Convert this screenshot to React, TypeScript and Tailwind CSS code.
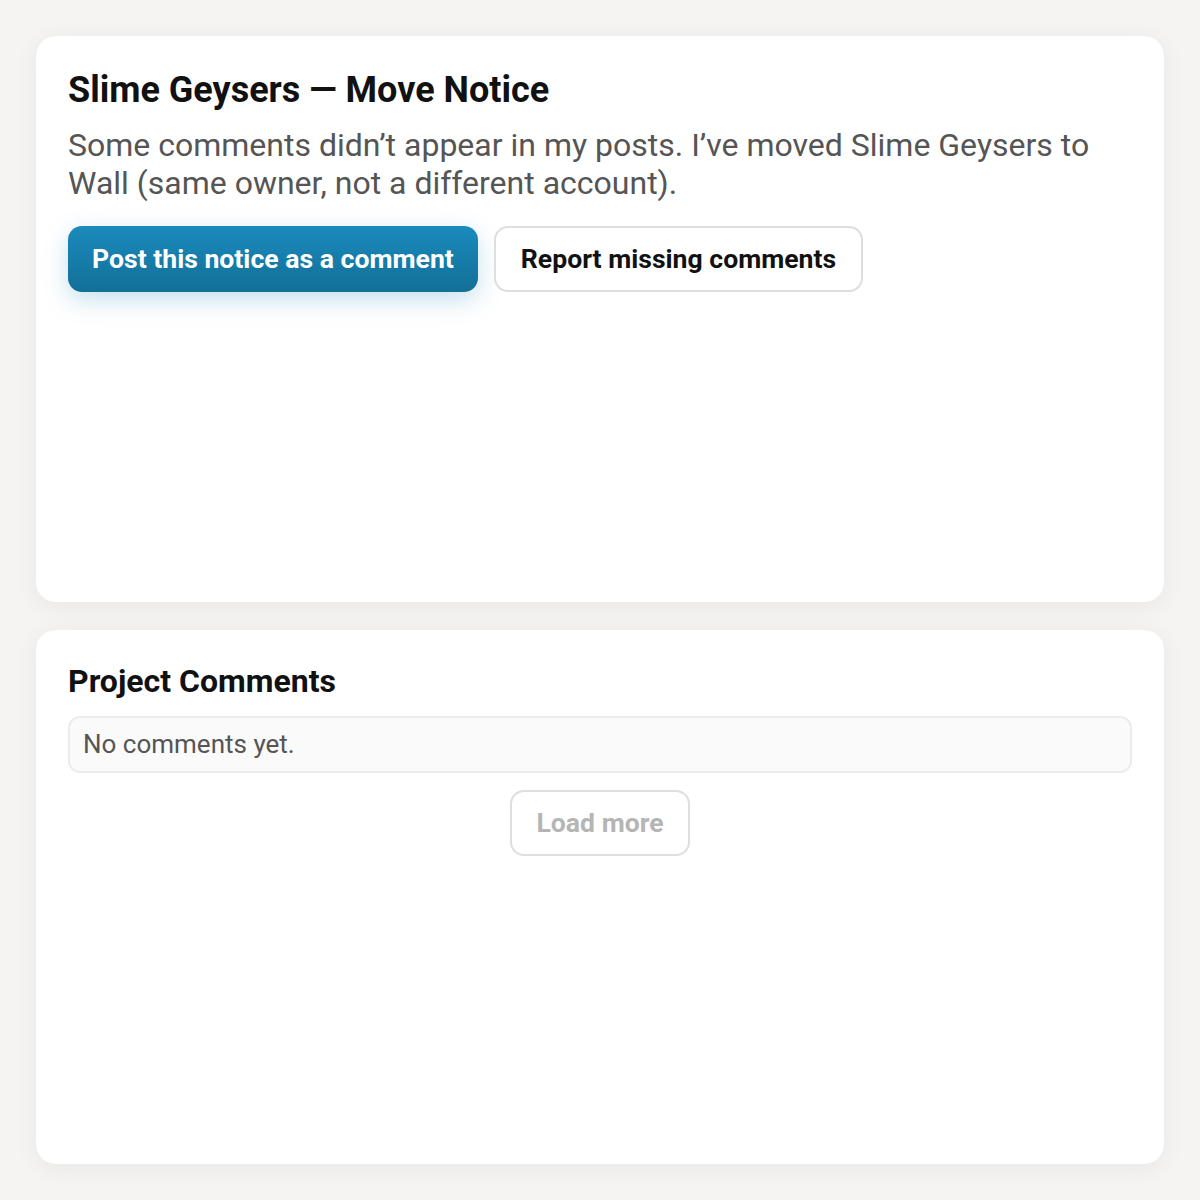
export default function App() {
  return (
    <div
      className="min-h-[1200px] bg-[#f5f4f2] p-[36px] flex flex-col gap-[28px]"
      style={{ fontFamily: "Roboto, 'Noto Sans', sans-serif" }}
    >
      <section className="h-[566px] rounded-[20px] bg-white px-[32px] pt-[32px] shadow-[0_4px_24px_rgba(0,0,0,0.06)]">
        <h1 className="text-[36px] leading-[44px] font-bold text-[#111]">Slime Geysers — Move Notice</h1>
        <p className="mt-[14px] text-[32px] leading-[38px] text-[#555]">
          Some comments didn’t appear in my posts. I’ve moved Slime Geysers to Wall (same owner, not a different account).
        </p>
        <div className="mt-[24px] flex gap-[16px]">
          <button className="h-[66px] px-[24px] rounded-[14px] bg-gradient-to-b from-[#1a8bbd] to-[#136f97] text-white text-[26.6px] font-bold shadow-[0_8px_24px_rgba(26,139,189,0.25)]">
            Post this notice as a comment
          </button>
          <button className="h-[66px] px-[25px] rounded-[14px] bg-white border-2 border-[#dedede] text-[#111] text-[26.6px] font-bold">
            Report missing comments
          </button>
        </div>
      </section>
      <section className="h-[534px] rounded-[20px] bg-white px-[32px] pt-[32px] shadow-[0_4px_24px_rgba(0,0,0,0.06)]">
        <h2 className="text-[32px] leading-[38px] font-bold text-[#111]">Project Comments</h2>
        <div className="mt-[16px] h-[57px] rounded-[12px] border-2 border-[#ececec] bg-[#fafafa] px-[13px] flex items-center text-[26px] text-[#555]">
          No comments yet.
        </div>
        <div className="mt-[17px] flex justify-center">
          <button className="h-[66px] w-[180px] rounded-[14px] bg-white border-2 border-[#dedede] text-[#b5b5b5] text-[26.6px] font-bold">
            Load more
          </button>
        </div>
      </section>
    </div>
  );
}
